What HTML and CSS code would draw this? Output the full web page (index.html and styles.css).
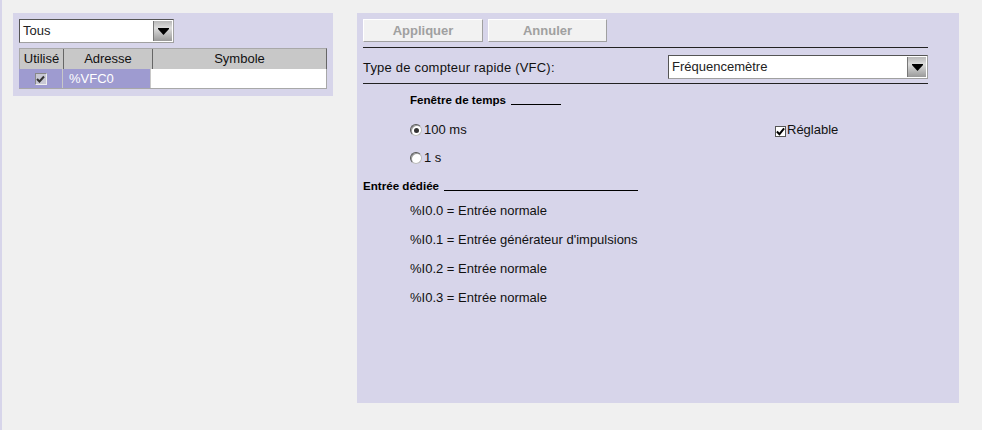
FILE: index.html
```html
<!DOCTYPE html>
<html>
<head>
<meta charset="utf-8">
<link rel="stylesheet" href="styles.css">
</head>
<body>
<div class="page">
  <div class="panel-left">
    <div class="select select-small">
      <span class="select-text">Tous</span>
      <span class="select-btn"><svg width="11" height="7" viewBox="0 0 11 7"><path d="M0 0H11V1L5.5 7 0 1Z" fill="#000"/></svg></span>
    </div>
    <div class="table">
      <div class="trow thead">
        <div class="c c1">Utilisé</div>
        <div class="c c2">Adresse</div>
        <div class="c c3">Symbole</div>
      </div>
      <div class="trow tdata">
        <div class="c c1 sel"><span class="tcheck"><svg width="9" height="8" viewBox="0 0 9 8"><path d="M1 4L3.5 6.5 8 1.5" stroke="#333" stroke-width="2" fill="none"/></svg></span></div>
        <div class="c c2 sel addr">%VFC0</div>
        <div class="c c3 white"></div>
      </div>
    </div>
  </div>
  <div class="panel-right">
    <div class="buttons">
      <div class="btn">Appliquer</div>
      <div class="btn">Annuler</div>
    </div>
    <div class="hline"></div>
    <div class="type-row">
      <span class="label">Type de compteur rapide (VFC):</span>
      <div class="select select-wide">
        <span class="select-text">Fréquencemètre</span>
        <span class="select-btn"><svg width="11" height="7" viewBox="0 0 11 7"><path d="M0 0H11V1L5.5 7 0 1Z" fill="#000"/></svg></span>
      </div>
    </div>
    <div class="hline"></div>
    <div class="row r-fen indent"><span class="bold">Fenêtre de temps</span><span class="rule rule-fen"></span></div>
    <div class="row r-radio1 indent">
      <span class="radio on"><span class="dot"></span></span><span class="rtext">100 ms</span>
      <span class="chk-wrap"><span class="chk"><svg width="10" height="9" viewBox="0 0 10 9"><path d="M1 4.5L3.8 7.5 9 1" stroke="#000" stroke-width="2.2" fill="none"/></svg></span>Réglable</span>
    </div>
    <div class="row r-radio2 indent">
      <span class="radio"></span><span class="rtext">1 s</span>
    </div>
    <div class="row r-entree"><span class="bold">Entrée dédiée</span><span class="rule rule-ent"></span></div>
    <div class="row r-i0 indent">%I0.0 = Entrée normale</div>
    <div class="row r-i indent">%I0.1 = Entrée générateur d'impulsions</div>
    <div class="row r-i indent">%I0.2 = Entrée normale</div>
    <div class="row r-i indent">%I0.3 = Entrée normale</div>
  </div>
</div>
</body>
</html>
```
FILE: styles.css
```css
html, body {
  margin: 0;
  padding: 0;
}
body {
  background: #f0f0f0;
  font-family: "Liberation Sans", Arial, sans-serif;
  font-size: 13px;
  color: #000;
  width: 982px;
  height: 430px;
  overflow: hidden;
  border-left: 2px solid #d7d5ea;
  box-sizing: border-box;
}
.page {
  display: flex;
  align-items: flex-start;
  padding-top: 13px;
}
.panel-left {
  margin-left: 11px;
  width: 320px;
  height: 83px;
  background: #d7d5ea;
  box-sizing: border-box;
  padding: 6px 0 0 6px;
}
.select {
  display: flex;
  background: #fff;
  border: 1px solid #555;
  border-right-color: #a0a0a0;
  border-bottom-color: #a0a0a0;
  box-sizing: border-box;
  height: 24px;
}
.select-small { width: 155px; }
.select-wide { width: 260px; }
.select-text {
  flex: 1;
  padding-left: 3px;
  line-height: 22px;
  font-size: 13px;
  color: #222;
}
.select-btn {
  width: 18px;
  margin: 1px;
  background: linear-gradient(to bottom, #b8b8b8 0%, #dcdcdc 35%, #9a9a9a 100%);
  border-left: 1px solid #777;
  display: flex;
  align-items: center;
  justify-content: center;
}
.table {
  margin-top: 5px;
  width: 308px;
}
.trow {
  display: flex;
}
.thead {
  height: 21px;
  background: #c8c8c8;
  border-top: 1px solid #a8a8a8;
  border-right: 1px solid #666;
  box-sizing: border-box;
}
.thead .c {
  line-height: 20px;
  font-size: 13px;
  text-align: center;
  color: #111;
  border-left: 1px solid #666;
}
.thead .c1 { border-left: 1px solid #a8a8a8; }
.c1 { width: 43px; }
.c2 { width: 88px; }
.c3 { flex: 1; }
.tdata {
  height: 19px;
  border-bottom: 1px solid #a8a8a8;
  border-right: 1px solid #a8a8a8;
}
.tdata .c { box-sizing: border-box; }
.sel { background: #9e9bd0; }
.tdata .c2 { border-left: 1px solid #c8c8c8; }
.tdata .c1 { display: flex; align-items: center; justify-content: center; }
.tcheck {
  width: 10px;
  height: 10px;
  background: #c8c8d4;
  border: 1px solid #888;
  border-right-color: #eee;
  border-bottom-color: #eee;
  display: flex;
  align-items: center;
  justify-content: center;
}
.addr {
  color: #fff;
  font-size: 13px;
  line-height: 19px;
  padding-left: 6px;
}
.white { background: #fff; border-left: 1px solid #c8c8c8; }
.panel-right {
  margin-left: 24px;
  width: 602px;
  height: 390px;
  background: #d7d5ea;
  box-sizing: border-box;
  padding: 6px 31px 0 6px;
}
.buttons {
  display: flex;
  gap: 5px;
}
.btn {
  width: 120px;
  height: 23px;
  box-sizing: border-box;
  background: #f2f2f2;
  border: 1px solid #fff;
  border-right-color: #a0a0a0;
  border-bottom-color: #a0a0a0;
  text-align: center;
  line-height: 21px;
  font-weight: bold;
  font-size: 13px;
  color: #a0a0a0;
}
.btn + .btn { width: 119px; }
.hline {
  height: 1px;
  background: #222;
  margin-top: 5px;
}
.type-row {
  display: flex;
  align-items: center;
  justify-content: space-between;
  margin-top: 7px;
  height: 24px;
}
.label { font-size: 13px; color: #111; letter-spacing: 0.2px; }
.type-row + .hline { margin-top: 4px; }
.row {
  height: 16px;
  line-height: 16px;
  font-size: 13px;
  color: #111;
  display: flex;
  align-items: center;
  position: relative;
}
.indent { padding-left: 47px; }
.bold { font-weight: bold; font-size: 11.6px; color: #000; }
.rule {
  display: inline-block;
  height: 1px;
  background: #000;
  align-self: flex-end;
  margin-bottom: 3px;
  margin-left: 5px;
}
.rule-fen { width: 50px; }
.rule-ent { width: 194px; }
.r-fen { margin-top: 8px; }
.r-radio1 { margin-top: 14px; }
.r-radio2 { margin-top: 12px; }
.r-entree { margin-top: 12px; }
.r-i0 { margin-top: 9px; }
.r-i { margin-top: 13px; }
.radio {
  width: 12px;
  height: 12px;
  box-sizing: border-box;
  border-radius: 50%;
  background: #fff;
  border: 1px solid #555;
  border-right-color: #bbb;
  border-bottom-color: #bbb;
  box-shadow: inset 1px 1px 0 #999;
  display: inline-flex;
  align-items: center;
  justify-content: center;
  margin-right: 2px;
}
.dot {
  width: 5px;
  height: 5px;
  border-radius: 50%;
  background: #333;
}
.rtext { font-size: 13px; }
.chk-wrap {
  position: absolute;
  left: 412px;
  top: 0;
  display: flex;
  align-items: center;
  font-size: 13px;
}
.chk {
  width: 11px;
  height: 11px;
  box-sizing: border-box;
  background: #fff;
  border: 1px solid #555;
  display: inline-flex;
  align-items: flex-end;
  justify-content: center;
  margin-right: 1px;
  margin-top: 3px;
}
```
